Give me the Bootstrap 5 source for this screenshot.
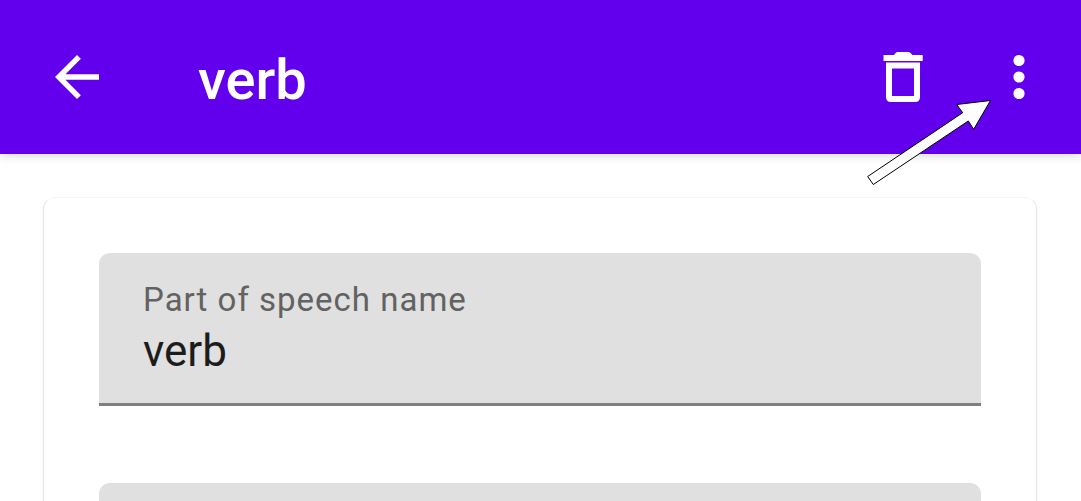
<!DOCTYPE html>
<html lang="en">
<head>
<meta charset="utf-8">
<meta name="viewport" content="width=device-width, initial-scale=1">
<title>verb</title>
<link href="https://cdn.jsdelivr.net/npm/bootstrap@5.3.0/dist/css/bootstrap.min.css" rel="stylesheet">
<style>
  body { font-family: Roboto, sans-serif; background: #fff; }
  .app-bar {
    background: #6200ee; height: 154px; padding: 0 29px 0 44px;
    box-shadow: 0 1px 10px rgba(0, 0, 0, .18); z-index: 1;
  }
  .app-bar svg { display: block; fill: #fff; }
  .app-title { font-size: 56px; line-height: 64px; font-weight: 500; margin: 5px 0 0 88px; }
  .bar-actions { gap: 50px; }
  .pointer-arrow { right: 88px; top: 98px; pointer-events: none; }
  .form-panel {
    margin: 43px 44px 0 43px; padding: 55px; gap: 77px;
    border: 1px solid #e6e6e6; border-top-color: #f4f4f4; border-bottom: 0;
    border-radius: 12px 12px 0 0; box-shadow: 0 1px 2px rgba(0, 0, 0, .06);
  }
  .filled-field {
    height: 153px; flex-shrink: 0; padding: 28px 44px 0;
    background: #e0e0e0; border-bottom: 3px solid #808080; border-radius: 11px 11px 0 0;
  }
  .filled-field label { font-size: 33px; line-height: 38px; color: #626262; letter-spacing: 1px; }
  .filled-field input { font-size: 44px; line-height: 52px; height: 52px; color: #1c1c1c; outline: 0; margin-top: 6px; }
</style>
</head>
<body>
<div class="vh-100 d-flex flex-column overflow-hidden">
  <header class="app-bar position-relative d-flex align-items-center flex-shrink-0 text-white">
    <button type="button" class="btn p-0 border-0" aria-label="Back">
      <svg width="66" height="66" viewBox="0 0 24 24"><path d="M20 11H7.8l5.6-5.6L12 4l-8 8 8 8 1.4-1.4L7.8 13H20z"/></svg>
    </button>
    <h1 class="app-title">verb</h1>
    <div class="bar-actions d-flex ms-auto">
      <button type="button" class="btn p-0 border-0" aria-label="Delete">
        <svg width="66" height="66" viewBox="0 0 66 66"><path fill-rule="evenodd" d="M13.5 11H24l2-2.500q.7-.5 1.500-.5h11q.9 0 1.500.5l2.500 2.500h10.200v6H13.500zM16 18.500h34V53q0 5-5 5H21q-5 0-5-5zm6 6V52h22V24.500z"/></svg>
      </button>
      <button type="button" class="btn p-0 border-0" aria-label="More options">
        <svg width="66" height="66" viewBox="0 0 66 66"><circle cx="33" cy="16.500" r="5.600"/><circle cx="33" cy="33" r="5.600"/><circle cx="33" cy="49.500" r="5.600"/></svg>
      </button>
    </div>
    <svg class="pointer-arrow position-absolute" width="128" height="90" viewBox="865 98 128 90" aria-hidden="true"><path stroke="#000" d="M990.500 100.500 973.700 129.300 968.300 121 873.300 184.500 867.700 176.500 962.700 112.700 956.700 104.500z"/></svg>
  </header>
  <main class="form-panel d-flex flex-column flex-grow-1 overflow-hidden">
    <div class="filled-field d-flex flex-column">
      <label for="pos-name">Part of speech name</label>
      <input id="pos-name" type="text" value="verb" class="w-100 p-0 border-0 bg-transparent">
    </div>
    <div class="filled-field d-flex flex-column">
      <input type="text" class="w-100 p-0 border-0 bg-transparent" aria-label="Abbreviation">
    </div>
  </main>
</div>
<script src="https://cdn.jsdelivr.net/npm/bootstrap@5.3.0/dist/js/bootstrap.bundle.min.js"></script>
</body>
</html>
